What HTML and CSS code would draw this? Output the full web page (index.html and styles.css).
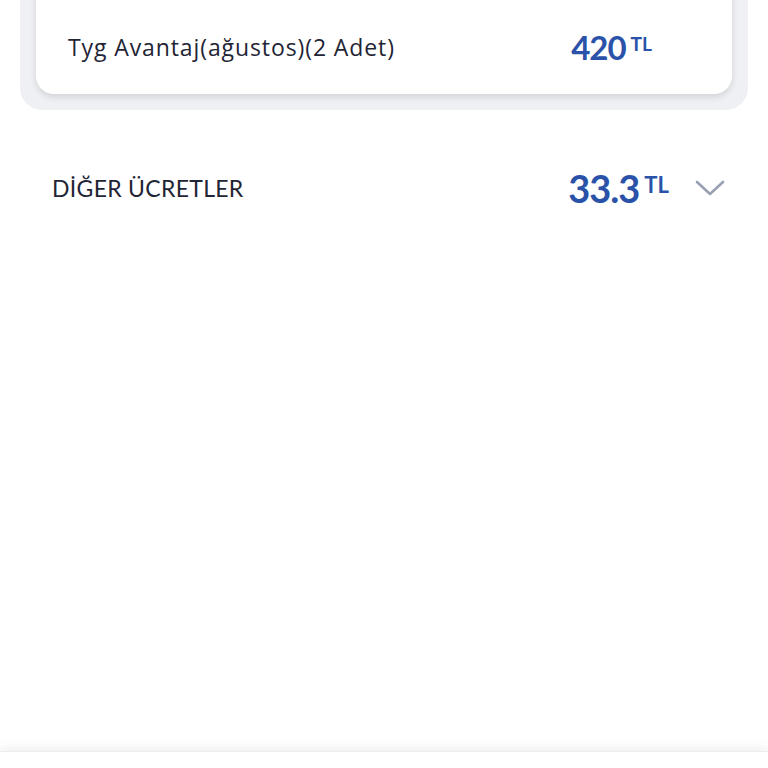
FILE: index.html
```html
<!DOCTYPE html>
<html lang="tr">
<head>
<meta charset="UTF-8" />
<meta name="viewport" content="width=device-width, initial-scale=1" />
<title>Ücretler</title>
<link rel="stylesheet" href="styles.css">
</head>
<body>

<div class="page">
  <div class="group">
    <div class="item-card">
      <div class="item-name">Tyg Avantaj(ağustos)(2 Adet)</div>
      <div class="price small">420<span class="cur">TL</span></div>
    </div>
  </div>

  <div class="fee-row">
    <div class="fee-title">DİĞER ÜCRETLER</div>
    <div class="fee-right">
      <div class="price big">33.3<span class="cur">TL</span></div>
      <svg class="chevron" width="30" height="16" viewBox="0 0 30 16">
        <path d="M2 2 L15 14 L28 2" fill="none" stroke="#9aa0b3" stroke-width="2.6" stroke-linecap="round" stroke-linejoin="round"/>
      </svg>
    </div>
  </div>
</div>

<div class="bottom-bar"></div>

</body>
</html>
```

FILE: styles.css
```css
body {
  margin: 0;
  background: #ffffff;
  font-family: "Lato", "Noto Sans", sans-serif;
  color: #1f2535;
  height: 768px;
  overflow: hidden;
  position: relative;
}

.page {
  padding: 0 20px;
}

.group {
  background: #eff0f3;
  border-radius: 22px;
  padding: 0 16px 16px;
  margin-top: -20px;
}

.item-card {
  background: #ffffff;
  border-radius: 18px;
  box-shadow: 0 3px 6px rgba(0, 0, 0, 0.12);
  height: 114px;
  display: flex;
  align-items: center;
  padding: 20px 32px 0;
  box-sizing: border-box;
}

.item-name {
  font-family: "Open Sans", "Lato", sans-serif;
  font-size: 23px;
  letter-spacing: 0.9px;
  flex: 1;
}

.price {
  color: #2a52a8;
  font-weight: 700;
  white-space: nowrap;
}

.price .cur {
  font-size: 0.58em;
  margin-left: 5px;
  vertical-align: 0.45em;
  letter-spacing: 0;
}

.price.small {
  font-size: 33px;
  margin-right: 48px;
  letter-spacing: -1px;
}

.fee-row {
  display: flex;
  align-items: center;
  padding: 0 23px 0 32px;
  margin-top: 55px;
}

.fee-title {
  flex: 1;
  font-size: 23px;
  letter-spacing: 0.3px;
}

.fee-right {
  display: flex;
  align-items: center;
  gap: 26px;
}

.price.big {
  font-size: 38px;
  letter-spacing: -1px;
}

.bottom-bar {
  position: absolute;
  left: 0;
  right: 0;
  top: 751px;
  height: 20px;
  background: #ffffff;
  box-shadow: 0 -4px 10px rgba(0, 0, 0, 0.06);
  border-top: 1px solid #eeeeee;
}
```
